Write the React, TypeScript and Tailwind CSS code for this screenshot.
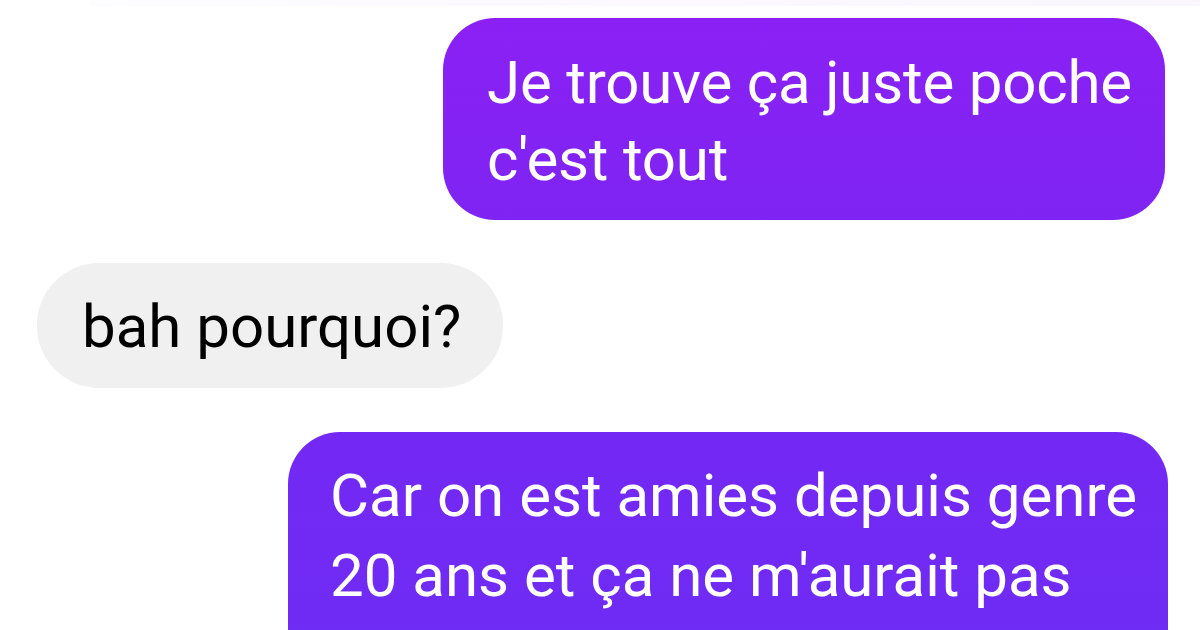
import React from "react";

const App = () => {
  return (
    <div className="w-[1200px] h-[630px] overflow-hidden bg-white font-['Roboto',sans-serif] text-[60px] leading-[77px]">
      {/* faint edge of the previous message */}
      <div className="h-[6px] ml-[90px] bg-gradient-to-r from-[#fdfcff] to-[#f9f6fe]"></div>

      <div className="flex flex-col pt-[12px]">
        {/* sent */}
        <div className="flex justify-end pr-[35px]">
          <div className="w-[722px] rounded-[52px] bg-gradient-to-b from-[#8b20f5] to-[#7e24f2] text-white pl-[44px] pr-[30px] pt-[26px] pb-[22px] whitespace-nowrap tracking-[-0.2px]">
            Je trouve ça juste poche
            <br />
            c'est tout
          </div>
        </div>

        {/* received */}
        <div className="flex justify-start pl-[37px] mt-[43px]">
          <div className="rounded-[62px] bg-[#f0f0f0] text-black pl-[45px] pr-[42px] pt-[25px] pb-[23px] whitespace-nowrap">
            bah pourquoi?
          </div>
        </div>

        {/* sent */}
        <div className="flex justify-end pr-[32px] mt-[44px]">
          <div className="w-[880px] rounded-[52px] bg-gradient-to-b from-[#7428f4] to-[#6c2df4] text-white pl-[42px] pr-[30px] pt-[24px] pb-[22px] leading-[80px] whitespace-nowrap">
            Car on est amies depuis genre
            <br />
            20 ans et ça ne m'aurait pas
            <br />
            dérangé de le savoir
          </div>
        </div>
      </div>
    </div>
  );
};

export default App;
